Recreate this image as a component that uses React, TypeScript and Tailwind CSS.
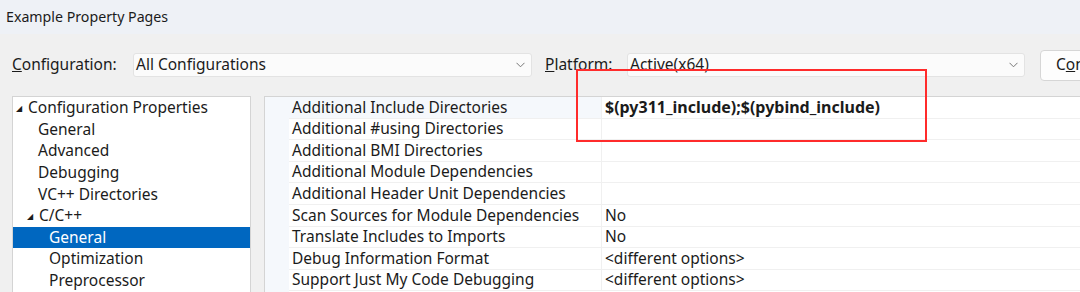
import React from 'react';

const tree = [
  { label: 'Configuration Properties', level: 0, toggle: true },
  { label: 'General', level: 1 },
  { label: 'Advanced', level: 1 },
  { label: 'Debugging', level: 1 },
  { label: 'VC++ Directories', level: 1 },
  { label: 'C/C++', level: 1, toggle: true },
  { label: 'General', level: 2, selected: true },
  { label: 'Optimization', level: 2 },
  { label: 'Preprocessor', level: 2 },
];

const props = [
  { name: 'Additional Include Directories', value: '$(py311_include);$(pybind_include)', bold: true, current: true },
  { name: 'Additional #using Directories', value: '' },
  { name: 'Additional BMI Directories', value: '' },
  { name: 'Additional Module Dependencies', value: '' },
  { name: 'Additional Header Unit Dependencies', value: '' },
  { name: 'Scan Sources for Module Dependencies', value: 'No' },
  { name: 'Translate Includes to Imports', value: 'No' },
  { name: 'Debug Information Format', value: '<different options>' },
  { name: 'Support Just My Code Debugging', value: '<different options>' },
];

function Chevron() {
  return (
    <svg width="9" height="6" viewBox="0 0 9 6" className="text-[#777]">
      <path d="M0.5 0.8 L4.5 4.8 L8.5 0.8" fill="none" stroke="currentColor" strokeWidth="1" />
    </svg>
  );
}

function Combo({ text, width }: { text: string; width: string }) {
  return (
    <div className={`${width} shrink-0 h-[24px] flex items-center justify-between bg-[#fbfbfb] border border-[#e3e3e3] rounded-[3px] pl-[2px] pr-[6px]`}>
      <span>{text}</span>
      <Chevron />
    </div>
  );
}

export default function App() {
  return (
    <div className="relative w-[1080px] h-[292px] overflow-hidden bg-[#f0f0f0] text-[#1b1b1b] text-[15.5px] font-['Noto_Sans',sans-serif]">
      {/* title bar */}
      <div className="h-[34px] flex items-center pl-[6px] bg-[#eef1f6] text-[14.2px]">Example Property Pages</div>

      {/* configuration row */}
      <div className="h-[62px] flex items-center pl-[12px] whitespace-nowrap overflow-hidden">
        <span className="w-[121px] shrink-0"><span className="underline">C</span>onfiguration:</span>
        <Combo text="All Configurations" width="w-[399px]" />
        <span className="ml-[13px] w-[82px] shrink-0"><span className="underline">P</span>latform:</span>
        <Combo text="Active(x64)" width="w-[398px]" />
        <div className="ml-[15px] h-[31px] w-[200px] shrink-0 flex items-center pl-[15px] bg-[#fdfdfd] border border-[#d6d6d6] rounded-[4px]">
          C<span className="underline">o</span>nfiguration Manager...
        </div>
      </div>

      {/* panels */}
      <div className="flex pl-[12px] h-[196px]">
        <div className="w-[239px] shrink-0 bg-white border border-[#d4d4d4] border-b-0 overflow-hidden">
          {tree.map((t, i) => (
            <div
              key={i}
              className={`h-[21.6px] flex items-center whitespace-nowrap ${t.selected ? 'bg-[#0067c0] text-white' : ''} ${
                t.level === 0 ? 'pl-[3px]' : t.level === 1 ? 'pl-[25px]' : 'pl-[36px]'
              }`}
            >
              {t.toggle && (
                <span className={`text-[8px] w-[12px] leading-none ${t.level === 1 ? '-ml-[11px]' : ''}`}>◢</span>
              )}
              <span>{t.label}</span>
            </div>
          ))}
        </div>

        <div className="ml-[13px] flex-1 flex bg-white border border-[#d4d4d4] border-b-0 border-r-0 overflow-hidden">
          <div className="w-[24px] shrink-0 bg-[#f5f8fc]" />
          <div className="flex-1">
            {props.map((p, i) => (
              <div key={i} className="h-[21.6px] flex border-b border-[#f0f0f0] whitespace-nowrap">
                <div className={`w-[313px] shrink-0 flex items-center pl-[3px] border-r border-[#f0f0f0] ${p.current ? 'bg-[#f5f8fc]' : ''}`}>
                  {p.name}
                </div>
                <div className={`flex-1 flex items-center pl-[3px] ${p.bold ? 'font-bold text-[16px]' : ''}`}>{p.value}</div>
              </div>
            ))}
          </div>
        </div>
      </div>

      {/* red highlight */}
      <div className="absolute left-[576px] top-[69px] w-[351px] h-[73px] border-2 border-[#ff2b2b] pointer-events-none" />
    </div>
  );
}
